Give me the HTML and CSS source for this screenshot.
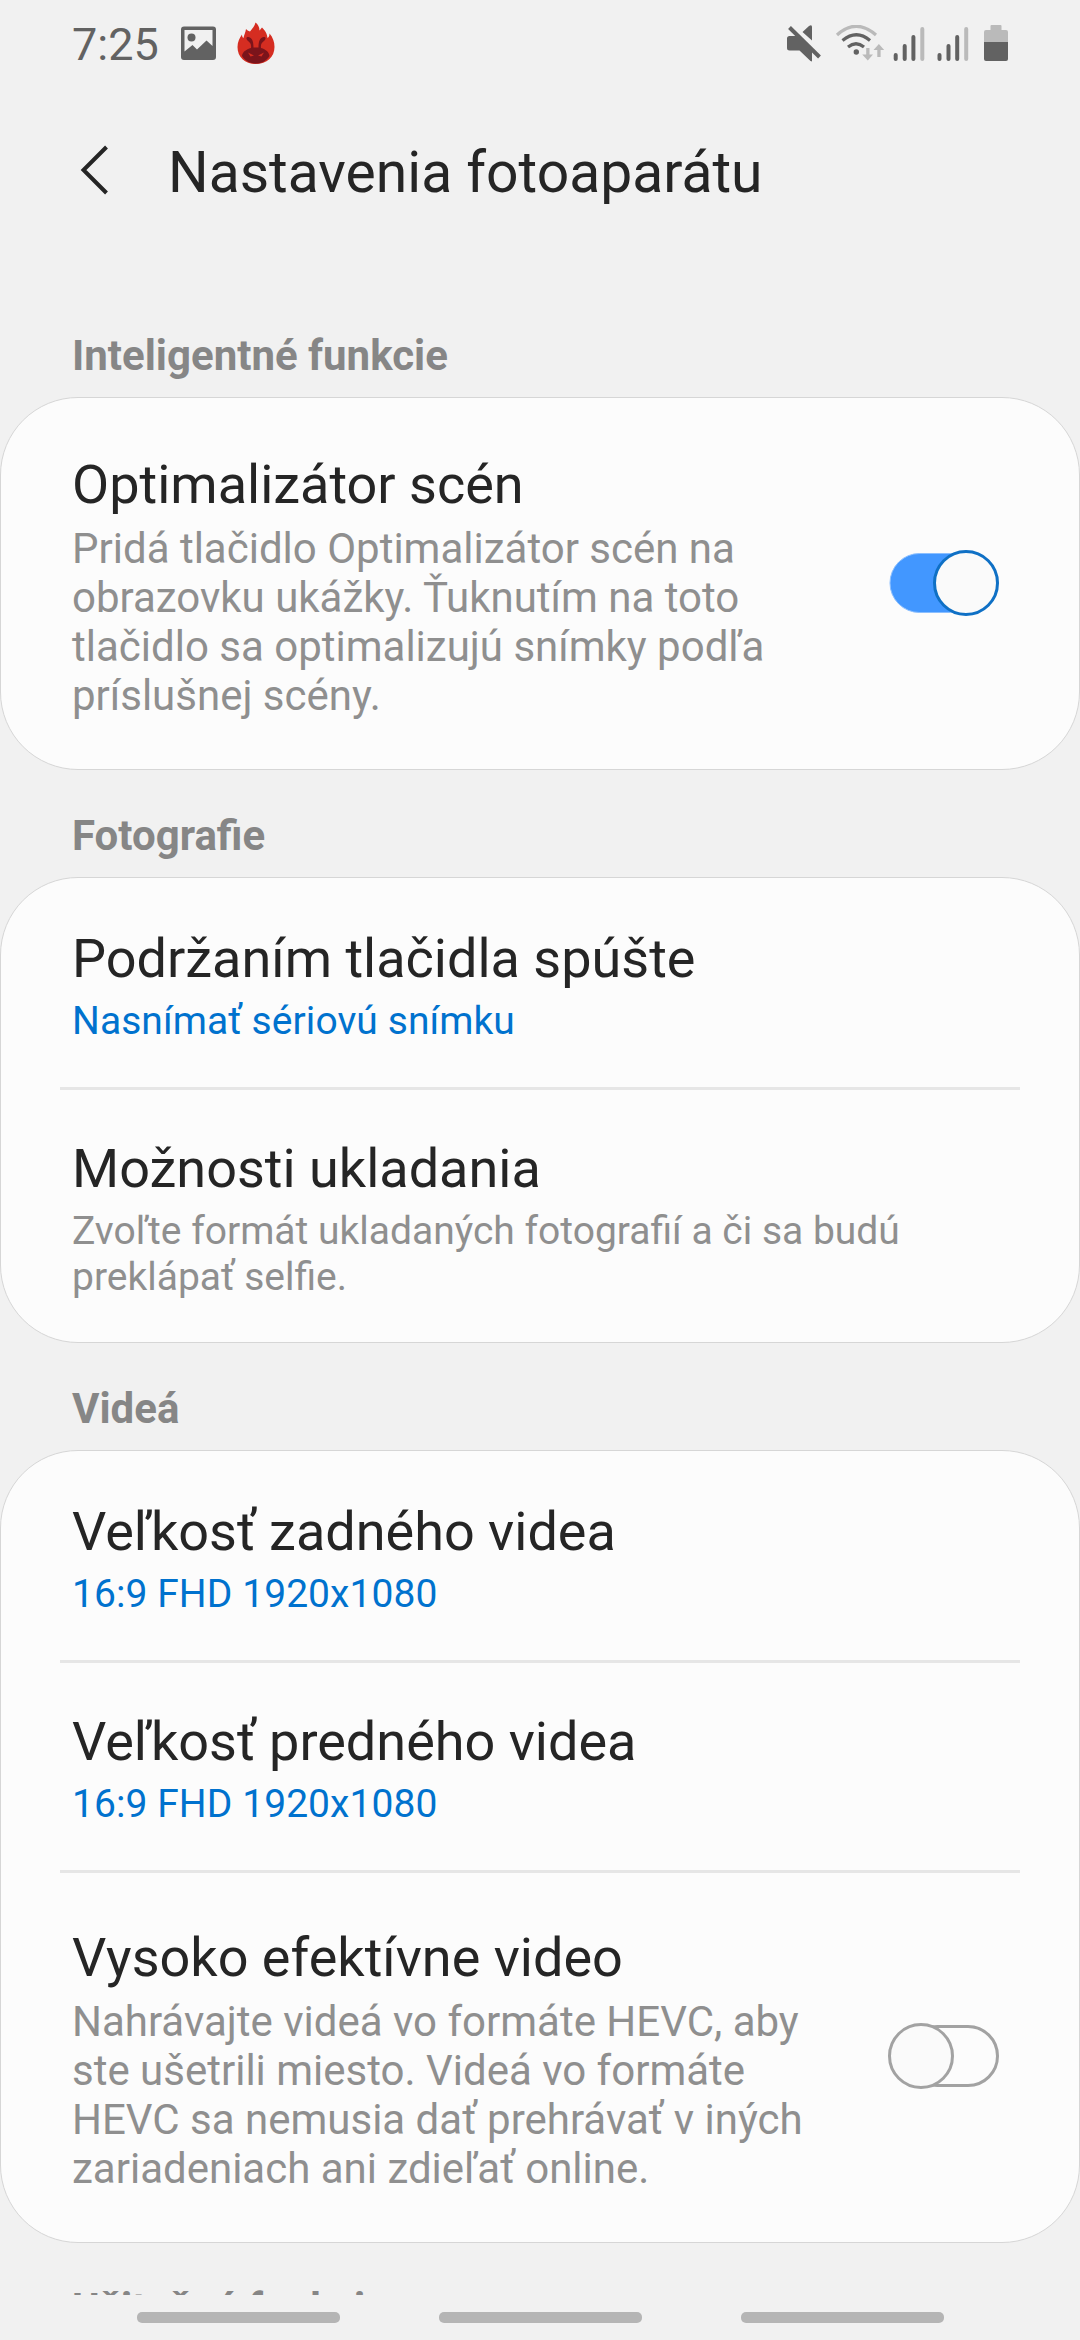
FILE: index.html
```html
<!DOCTYPE html>
<html lang="sk">
<head>
<meta charset="utf-8">
<title>Nastavenia fotoaparátu</title>
<link rel="stylesheet" href="styles.css">
</head>
<body>
<div class="screen">
  <header class="status">
    <span class="clock">7:25</span>
    <svg class="ic-image" width="36" height="36" viewBox="0 0 36 36"><path fill="#626262" fill-rule="evenodd" d="M3 .5h29a3 3 0 0 1 3 3V31a3 3 0 0 1-3 3H3a3 3 0 0 1-3-3V3.500a3 3 0 0 1 3-3ZM3.500 4v21.500L11.500 19l4.500 4.500L25.500 14.500 31.500 20V4Z"/><circle cx="10.500" cy="11.500" r="4" fill="#626262"/></svg>
    <svg class="ic-ant" width="38" height="43" viewBox="0 0 38 43"><path fill="#d52d21" d="M18.500 42C8 42 .5 35 .5 25c0-5 2-9 4.500-12.500 0 2 .5 3 1.500 3.500C7 12.500 8.500 11 9 7c1 1 2 2 4 2.500C16 6 17.500 4 18.500.5c2.500 2 4 4.500 4 8L25 5.500c4 4 5 6.500 5.500 10.500 1.500-1 2-2.500 2-4.500 3.500 4 5 8.500 5 13.500C37.500 35 30 42 18.500 42Z"/><path fill="#7b141b" d="M14 26c.5-3.500-.5-5-3.500-7.500-2-2-1-4 1-3.500 4 1 5 5 5 10.500h5c0-5.500 1-9.500 5-10.500 2-.5 3 1.500 1 3.500-3 2.500-4 4-3.500 7.500 5 1.500 8 4 8.500 8-3 5-8 7.500-13.500 7.500S8 39 5 34c.5-4 4-6.500 9-8Z"/><path fill="#d52d21" d="m11 30.500 6 3-3.500 1Zm16 0-6 3 3.500 1Z"/></svg>
    <svg class="ic-system" width="224" height="40" viewBox="0 0 224 40">
      <path fill="#626262" d="M2.500 11H9.500L25 26v10.500L23.500 36 12.500 25.500H2.500a2.500 2.500 0 0 1-2.500-2.500v-9.500A2.500 2.500 0 0 1 2.500 11ZM15.500 7 22 1q3-2 3 1v13.500Z"/>
      <path d="M2.500 2.500 32.500 32" stroke="#626262" stroke-width="4"/>
      <g fill="none" stroke-width="3.200"><path stroke="#bababa" d="M50 10Q69-7.500 89 10"/><path stroke="#626262" d="M55.500 15.500q14-11.500 27.500 0M61 22q8-6.500 16 0"/></g>
      <circle cx="69.300" cy="27" r="2.700" fill="#626262"/>
      <g fill="#bababa"><path d="M79.200 23h3.300v6.500h3.500L80.800 35.500 75.200 29.500h4Z"/><path d="M90.300 32h3.300v-7h3.600L91.900 19 86.500 25h3.800Z"/></g>
      <g stroke-width="4" stroke-linecap="round" stroke="#626262"><path d="M108.700 30v4M117.700 21V34M126.400 12V34M152.500 30v4M161.500 21V34M170.200 12V34"/><path stroke="#bababa" d="M135.300 4V34M179.200 4V34"/></g>
      <path fill="#bababa" d="M203.500 1q0-1 1-1h9q1 0 1 1v4h4.500q2 0 2 2v10.500h-24V7q0-2 2-2h4.500Z"/><path fill="#626262" d="M197 17h24v17q0 2-2 2h-20q-2 0-2-2Z"/>
    </svg>
  </header>
  <div class="appbar">
    <svg class="back" width="30" height="50" viewBox="0 0 30 50"><path d="M26.500 2 3.500 25l23 23" fill="none" stroke="#252525" stroke-width="4"/></svg>
    <h1>Nastavenia fotoaparátu</h1>
  </div>
  <main>
    <h2>Inteligentné funkcie</h2>
    <section class="card">
      <div class="row toggle-row">
        <div class="label"><h3>Optimalizátor scén</h3><p>Pridá tlačidlo Optimalizátor scén na<br>obrazovku ukážky. Ťuknutím na toto<br>tlačidlo sa optimalizujú snímky podľa<br>príslušnej scény.</p></div>
        <svg class="switch" width="112" height="68" viewBox="0 0 112 68"><rect x="2" y="4.500" width="90" height="59" rx="29.500" fill="#4297ff" stroke="#8bbfff"/><circle cx="78" cy="34" r="31.500" fill="#fafafa" stroke="#0f70c5" stroke-width="3"/></svg>
      </div>
    </section>
    <h2>Fotografie</h2>
    <section class="card">
      <div class="row"><h3>Podržaním tlačidla spúšte</h3><p class="value">Nasnímať sériovú snímku</p></div>
      <div class="row"><h3>Možnosti ukladania</h3><p>Zvoľte formát ukladaných fotografií a či sa budú<br>preklápať selfie.</p></div>
    </section>
    <h2>Videá</h2>
    <section class="card">
      <div class="row"><h3>Veľkosť zadného videa</h3><p class="value">16:9 FHD 1920x1080</p></div>
      <div class="row"><h3>Veľkosť predného videa</h3><p class="value">16:9 FHD 1920x1080</p></div>
      <div class="row toggle-row">
        <div class="label"><h3>Vysoko efektívne video</h3><p>Nahrávajte videá vo formáte HEVC, aby<br>ste ušetrili miesto. Videá vo formáte<br>HEVC sa nemusia dať prehrávať v iných<br>zariadeniach ani zdieľať online.</p></div>
        <svg class="switch" width="112" height="68" viewBox="0 0 112 68"><rect x="20" y="4.500" width="89.500" height="59" rx="29.500" fill="none" stroke="#a2a2a2" stroke-width="3"/><circle cx="33" cy="34" r="31.500" fill="#fafafa" stroke="#a2a2a2" stroke-width="3"/></svg>
      </div>
    </section>
    <h2>Užitočné funkcie</h2>
  </main>
  <nav class="nav"><span></span><span></span><span></span></nav>
</div>
</body>
</html>
```
FILE: styles.css
```css
* { box-sizing: border-box; margin: 0; padding: 0; }
body { background: #f1f1f1; font-family: Roboto, sans-serif; color: #252525; }
svg { display: block; flex: none; }
.screen { width: 1080px; height: 2340px; overflow: hidden; display: flex; flex-direction: column; }
.status { height: 88px; flex: none; display: flex; align-items: flex-start; padding: 0 70px 0 72px; }
.clock { width: 109px; margin-top: 18px; font-size: 45px; line-height: 53px; color: #626262; }
.ic-image { margin-top: 26px; }
.ic-ant { margin: 22px 0 0 20px; }
.ic-system { margin: 25px -1px 0 auto; }
.appbar { height: 232px; flex: none; display: flex; align-items: flex-start; padding: 51px 0 0 80px; }
.back { margin-top: 6px; }
h1 { margin-left: 58px; font-size: 57px; line-height: 67px; font-weight: 400; }
main { height: 1975px; flex: none; overflow: hidden; }
h2 { height: 107px; padding: 41px 0 0 72px; font-size: 42px; line-height: 49px; font-weight: 700; color: #868686; }
main h2:first-child { height: 77px; padding-top: 11px; }
.card { background: #fcfcfc; border: 1px solid #d6d6d6; border-radius: 78px; }
.row { padding: 49px 71px 43px; position: relative; }
.row:last-child { padding-bottom: 42px; }
.row + .row { padding-top: 50px; }
.row + .row::before { content: ""; position: absolute; left: 59px; right: 59px; top: 0; height: 3px; background: #e6e6e6; }
h3 { font-size: 54px; line-height: 63px; font-weight: 400; margin-bottom: 8px; }
p { font-size: 39px; line-height: 46px; color: #8f8f8f; white-space: nowrap; }
.value { color: #0072ce; letter-spacing: 0.07px; }
.card .toggle-row { display: flex; align-items: center; justify-content: space-between; padding: 0 79px 0 71px; }
.label { padding: 55px 0 49px; }
.row + .toggle-row .label { padding-top: 56px; }
.switch { margin-bottom: 1px; }
.toggle-row p { font-size: 42px; line-height: 49px; }
.nav { height: 45px; flex: none; display: flex; justify-content: center; gap: 99px; padding-top: 17px; }
.nav span { width: 203px; height: 11px; border-radius: 5px; background: #b5b5b5; }
```
